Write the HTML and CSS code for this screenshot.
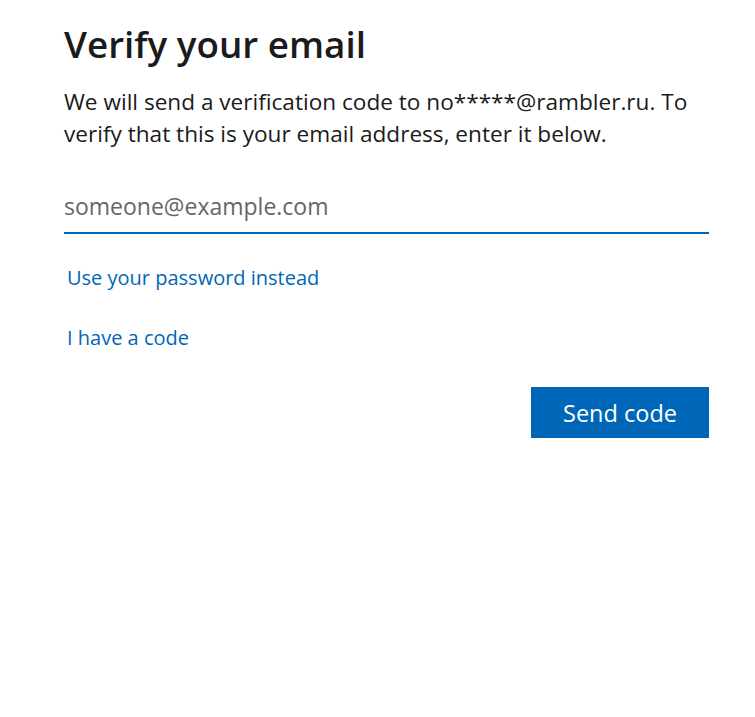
FILE: index.html
```html
<!DOCTYPE html>
<html>
<head>
<meta charset="utf-8">
<link rel="stylesheet" href="styles.css">
</head>
<body>
<main class="card">
  <h1 class="title">Verify your email</h1>
  <p class="desc">We will send a verification code to no*****@rambler.ru. To verify that this is your email address, enter it below.</p>
  <div class="field">
    <input class="input" type="email" placeholder="someone@example.com">
  </div>
  <div class="links">
    <a class="link" href="#">Use your password instead</a>
    <a class="link" href="#">I have a code</a>
  </div>
  <div class="actions">
    <button class="btn" type="button">Send code</button>
  </div>
</main>
</body>
</html>
```

FILE: styles.css
```css
html, body {
  margin: 0;
  padding: 0;
  background: #fff;
}
body {
  font-family: "Open Sans", "Noto Sans", sans-serif;
  color: #1b1b1b;
}
.card {
  width: 645px;
  padding: 22px 0 0 64px;
}
.title {
  margin: 0;
  font-size: 36.8px;
  font-weight: 600;
  line-height: 44px;
}
.desc {
  margin: 20px 0 0;
  font-size: 22.6px;
  line-height: 32px;
}
.field {
  margin-top: 41px;
}
.input {
  display: block;
  width: 100%;
  box-sizing: border-box;
  border: none;
  border-bottom: 2px solid #0067b8;
  padding: 0 0 11px 0;
  font-family: inherit;
  font-size: 23px;
  line-height: 30px;
  color: #1b1b1b;
  outline: none;
  background: transparent;
}
.input::placeholder {
  color: #666;
}
.links {
  display: flex;
  flex-direction: column;
  align-items: flex-start;
  gap: 30px;
  margin-top: 29px;
  padding-left: 3px;
}
.link {
  color: #0067b8;
  text-decoration: none;
  font-size: 20px;
  line-height: 30px;
}
.actions {
  display: flex;
  justify-content: flex-end;
  margin-top: 34px;
}
.btn {
  width: 178px;
  height: 51px;
  border: none;
  background: #0067b8;
  color: #fff;
  font-family: inherit;
  font-size: 23.5px;
}
```
